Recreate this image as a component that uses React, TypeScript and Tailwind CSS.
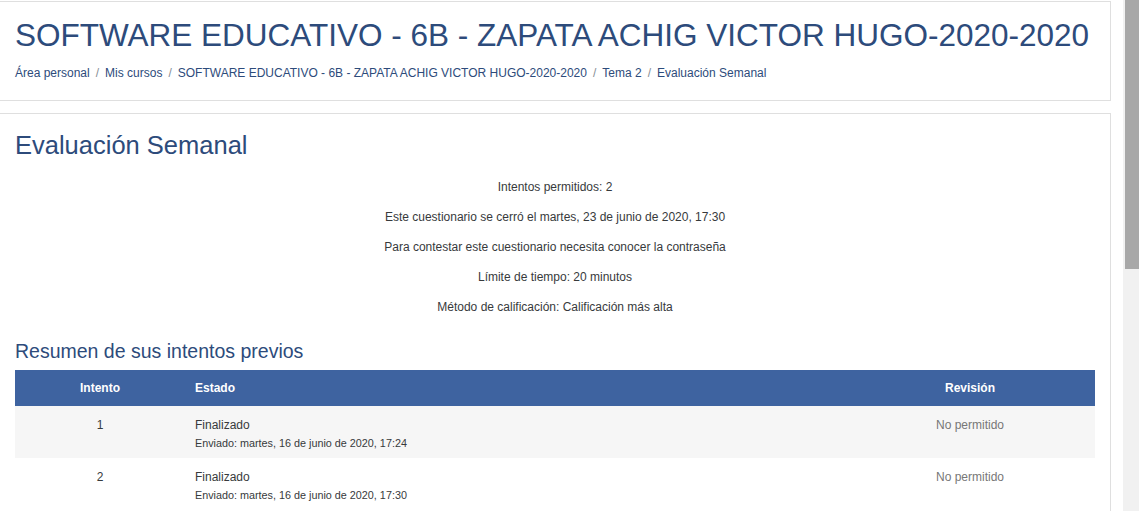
import React from 'react';

const font = { fontFamily: '"Liberation Sans", Arial, sans-serif' };

const crumbs = [
  'Área personal',
  'Mis cursos',
  'SOFTWARE EDUCATIVO - 6B - ZAPATA ACHIG VICTOR HUGO-2020-2020',
  'Tema 2',
  'Evaluación Semanal',
];

const info = [
  'Intentos permitidos: 2',
  'Este cuestionario se cerró el martes, 23 de junio de 2020, 17:30',
  'Para contestar este cuestionario necesita conocer la contraseña',
  'Límite de tiempo: 20 minutos',
  'Método de calificación: Calificación más alta',
];

const attempts = [
  { n: 1, sent: 'Enviado: martes, 16 de junio de 2020, 17:24' },
  { n: 2, sent: 'Enviado: martes, 16 de junio de 2020, 17:30' },
];

const App: React.FC = () => {
  return (
    <div className="flex h-[511px] w-[1139px] overflow-hidden bg-white" style={font}>
      <div className="w-[1123px] pt-px">
        {/* Course header */}
        <div className="w-[1111px] border-y border-r border-[#dfdfdf] bg-white px-[15px] pt-[14px] pb-[18px]">
          <h1 className="text-[31.5px] leading-[38px] text-[#2d4b7b] whitespace-nowrap">
            SOFTWARE EDUCATIVO - 6B - ZAPATA ACHIG VICTOR HUGO-2020-2020
          </h1>
          <nav className="mt-[10px] flex items-center text-[12px] leading-[18px] whitespace-nowrap">
            {crumbs.map((c, i) => (
              <React.Fragment key={c}>
                {i > 0 && <span className="px-[6px] text-[#868e96]">/</span>}
                <span className="text-[#2d4b7b]">{c}</span>
              </React.Fragment>
            ))}
          </nav>
        </div>

        {/* Quiz card */}
        <div className="mt-[12px] w-[1111px] border-t border-r border-[#dfdfdf] bg-white px-[15px] pt-[16px] h-[420px]">
          <h2 className="text-[25.5px] leading-[30px] text-[#2d4b7b]">Evaluación Semanal</h2>

          <div className="mt-[18px] flex flex-col gap-[12px] text-center text-[12px] leading-[18px] text-[#373a3c]">
            {info.map((t) => (
              <p key={t}>{t}</p>
            ))}
          </div>

          <h3 className="mt-[23px] text-[19.5px] leading-[24px] text-[#2d4b7b]">Resumen de sus intentos previos</h3>

          <div className="mt-[7px] w-[1080px] text-[12px] leading-[18px]">
            <div className="grid h-[36px] grid-cols-[170px_1fr_250px] items-center bg-[#3e63a0] font-bold text-white">
              <div className="text-center">Intento</div>
              <div className="pl-[10px]">Estado</div>
              <div className="text-center">Revisión</div>
            </div>
            {attempts.map((a, i) => (
              <div
                key={a.n}
                className={`grid h-[52px] grid-cols-[170px_1fr_250px] items-start pt-[10px] text-[#373a3c] ${
                  i % 2 === 0 ? 'bg-[#f6f6f6]' : 'bg-white'
                }`}
              >
                <div className="text-center">{a.n}</div>
                <div className="pl-[10px]">
                  <div>Finalizado</div>
                  <div className="mt-px text-[10.8px] leading-[16px]">{a.sent}</div>
                </div>
                <div className="text-center text-[#777]">No permitido</div>
              </div>
            ))}
          </div>
        </div>
      </div>

      {/* Scrollbar */}
      <div className="flex h-full w-[16px] bg-[#f1f1f1] pl-[2px]">
        <div className="h-[269px] w-[14px] bg-[#a8a8a8]" />
      </div>
    </div>
  );
};

export default App;
